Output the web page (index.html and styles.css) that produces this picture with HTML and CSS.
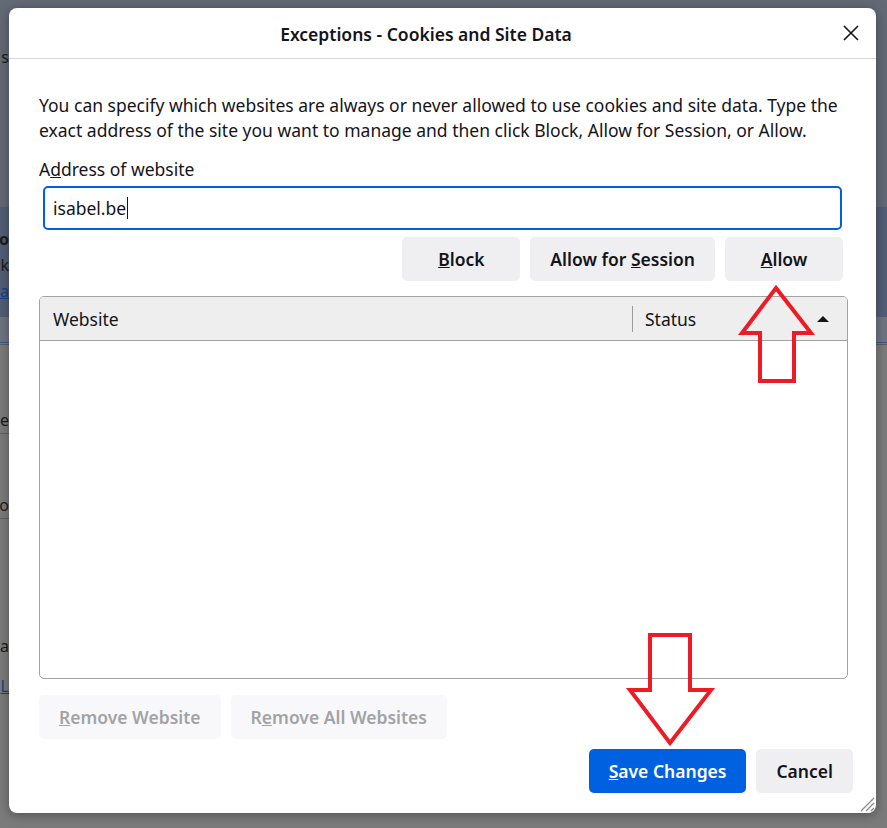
FILE: index.html
```html
<!DOCTYPE html>
<html lang="en">
<head>
    <meta charset="UTF-8">
    <meta name="viewport" content="width=device-width, initial-scale=1.0">
    <title>Exceptions - Cookies and Site Data</title>
    <link rel="stylesheet" href="styles.css">
</head>
<body>
    <!-- dimmed settings page behind the dialog -->
    <div class="backdrop">
        <div class="bd-top">
            <div class="bd-line">s</div>
        </div>
        <div class="bd-card">
            <div class="bd-line bd-bold">o</div>
            <div class="bd-line">k</div>
            <div class="bd-line bd-link">a</div>
        </div>
        <div class="bd-rest">
            <div class="bd-tab"></div>
            <div class="bd-line bd-gap-1">e</div>
            <div class="bd-rule"></div>
            <div class="bd-line bd-gap-2">o</div>
            <div class="bd-rule"></div>
            <div class="bd-line bd-gap-3">a</div>
            <div class="bd-line bd-link bd-gap-4">L</div>
        </div>
    </div>

    <div class="dialog">
        <div class="dialog-header">
            <h1 class="dialog-title">Exceptions - Cookies and Site Data</h1>
            <button class="close-btn" aria-label="Close">
                <svg width="16" height="16" viewBox="0 0 16 16">
                    <path d="M1 1 L15 15 M15 1 L1 15" stroke="#15141a" stroke-width="1.6" fill="none"/>
                </svg>
            </button>
        </div>

        <div class="dialog-body">
            <p class="intro">You can specify which websites are always or never allowed to use cookies and site data. Type the exact address of the site you want to manage and then click Block, Allow for Session, or Allow.</p>

            <label class="field-label">A<u>d</u>dress of website</label>
            <div class="url-input">isabel.be<span class="caret"></span></div>

            <div class="action-row">
                <button class="btn"><u>B</u>lock</button>
                <button class="btn">Allow for <u>S</u>ession</button>
                <button class="btn"><u>A</u>llow</button>
            </div>

            <div class="site-table">
                <div class="table-head">
                    <div class="col col-site">Website</div>
                    <div class="col col-status">
                        <span>Status</span>
                        <span class="sort-arrow"></span>
                    </div>
                </div>
                <div class="table-body"></div>
            </div>

            <div class="remove-row">
                <button class="btn" disabled><u>R</u>emove Website</button>
                <button class="btn" disabled>R<u>e</u>move All Websites</button>
            </div>
        </div>

        <div class="dialog-footer">
            <button class="btn btn-primary"><u>S</u>ave Changes</button>
            <button class="btn">Cancel</button>
        </div>

        <svg class="resize-grip" width="18" height="18" viewBox="0 0 18 18">
            <path d="M17 4 L4 17 M17 9 L9 17 M17 14 L14 17" stroke="#8a8a8a" stroke-width="1.2" fill="none"/>
        </svg>
    </div>

    <!-- red annotation arrows drawn over the screenshot -->
    <svg class="annotations" width="887" height="828" viewBox="0 0 887 828">
        <polygon points="776,288 811,333 794,333 794,381 760,381 760,333 742,333"
                 fill="none" stroke="#ed1c24" stroke-width="4" stroke-linejoin="miter"/>
        <polygon points="650,635 690,635 690,690 711,690 670,743 630,690 650,690"
                 fill="none" stroke="#ed1c24" stroke-width="4" stroke-linejoin="miter"/>
    </svg>
</body>
</html>
```

FILE: styles.css
```css
body {
    margin: 0;
    width: 887px;
    height: 828px;
    overflow: hidden;
    position: relative;
    background: #7d7d7d;
    font-family: 'Noto Sans', 'Open Sans', sans-serif;
    color: #15141a;
}

/* ---- page behind the modal ---- */
.backdrop {
    display: flex;
    flex-direction: column;
    height: 828px;
}

.bd-top {
    height: 207px;
    background: #636a76;
    padding-top: 44px;
    box-sizing: border-box;
}

.bd-card {
    height: 110px;
    background: #535d75;
    padding-top: 19px;
    box-sizing: border-box;
}

.bd-rest {
    flex: 1;
    background: #7b7b7b;
}

.bd-tab {
    height: 25px;
    background: #6f7481;
    border-bottom: 1px solid #34538f;
    margin-bottom: 7px;
    box-shadow: 0 1px 0 #7b7b7b, 0 2px 0 #5c5c5c;
}

.bd-line {
    display: flex;
    justify-content: flex-end;
    width: 9px;
    white-space: nowrap;
    font-size: 16px;
    line-height: 26px;
    color: #1b1b1b;
}

.bd-bold {
    font-weight: 700;
}

.bd-link {
    color: #1b3f8c;
    text-decoration: underline;
}

.bd-rule {
    height: 1px;
    width: 12px;
    background: #5e5e5e;
}

.bd-gap-1 { margin-top: 64px; }
.bd-gap-2 { margin-top: 58px; }
.bd-gap-3 { margin-top: 114px; }
.bd-gap-4 { margin-top: 14px; }

/* ---- dialog ---- */
.dialog {
    position: absolute;
    left: 9px;
    top: 8px;
    width: 867px;
    height: 805px;
    background: #fff;
    border-radius: 8px;
    box-shadow: 0 2px 12px rgba(0, 0, 0, 0.35);
    display: flex;
    flex-direction: column;
    font-size: 17.5px;
}

.dialog-header {
    display: flex;
    align-items: center;
    height: 50px;
    padding-right: 9px;
    border-bottom: 1px solid #d7d7db;
}

.dialog-title {
    flex: 1;
    margin: 0;
    padding: 2px 0 0 8px;
    text-align: center;
    font-size: 17.5px;
    font-weight: 600;
}

.close-btn {
    width: 32px;
    height: 32px;
    border: none;
    background: none;
    padding: 0;
    display: flex;
    align-items: center;
    justify-content: center;
}

.dialog-body {
    display: flex;
    flex-direction: column;
    padding: 34px 28px 0 30px;
}

.intro {
    margin: 0;
    line-height: 25px;
}

.field-label {
    margin-top: 14px;
    line-height: 25px;
}

.url-input {
    margin: 4px 6px 0 4px;
    height: 44px;
    box-sizing: border-box;
    border: 2px solid #0061e0;
    border-radius: 5px;
    padding-left: 8px;
    display: flex;
    align-items: center;
}

.caret {
    width: 1px;
    height: 22px;
    background: #15141a;
    margin-left: 1px;
}

.btn {
    font-family: inherit;
    font-size: 17.5px;
    font-weight: 600;
    color: #15141a;
    height: 44px;
    min-width: 118px;
    padding: 0 20px;
    border: none;
    border-radius: 5px;
    background: #efeff2;
}

.btn:disabled {
    background: #f8f8fa;
    color: #a3a3a6;
}

.btn-primary {
    background: #0061e0;
    color: #fff;
}

.action-row {
    display: flex;
    justify-content: flex-end;
    gap: 10px;
    margin-top: 7px;
    padding-right: 5px;
}

.site-table {
    margin-top: 15px;
    height: 383px;
    box-sizing: border-box;
    border: 1px solid #a1a1a6;
    border-radius: 5px;
    overflow: hidden;
    display: flex;
    flex-direction: column;
}

.table-head {
    display: flex;
    align-items: center;
    height: 43px;
    background: #eeeeee;
    border-bottom: 1px solid #a1a1a6;
}

.col {
    display: flex;
    align-items: center;
}

.col-site {
    width: 579px;
    padding-left: 13px;
    height: 26px;
    border-right: 1px solid #9a9a9f;
}

.col-status {
    flex: 1;
    justify-content: space-between;
    padding: 0 18px 0 12px;
}

.sort-arrow {
    width: 0;
    height: 0;
    border-left: 6px solid transparent;
    border-right: 6px solid transparent;
    border-bottom: 6px solid #15141a;
}

.table-body {
    flex: 1;
}

.remove-row {
    display: flex;
    gap: 10px;
    margin-top: 16px;
}

.dialog-footer {
    display: flex;
    justify-content: flex-end;
    gap: 10px;
    margin-top: 10px;
    padding-right: 23px;
}

.dialog-footer .btn {
    min-width: 0;
}

.resize-grip {
    position: absolute;
    right: 1px;
    bottom: 1px;
}

.annotations {
    position: absolute;
    left: 0;
    top: 0;
    pointer-events: none;
}
```
